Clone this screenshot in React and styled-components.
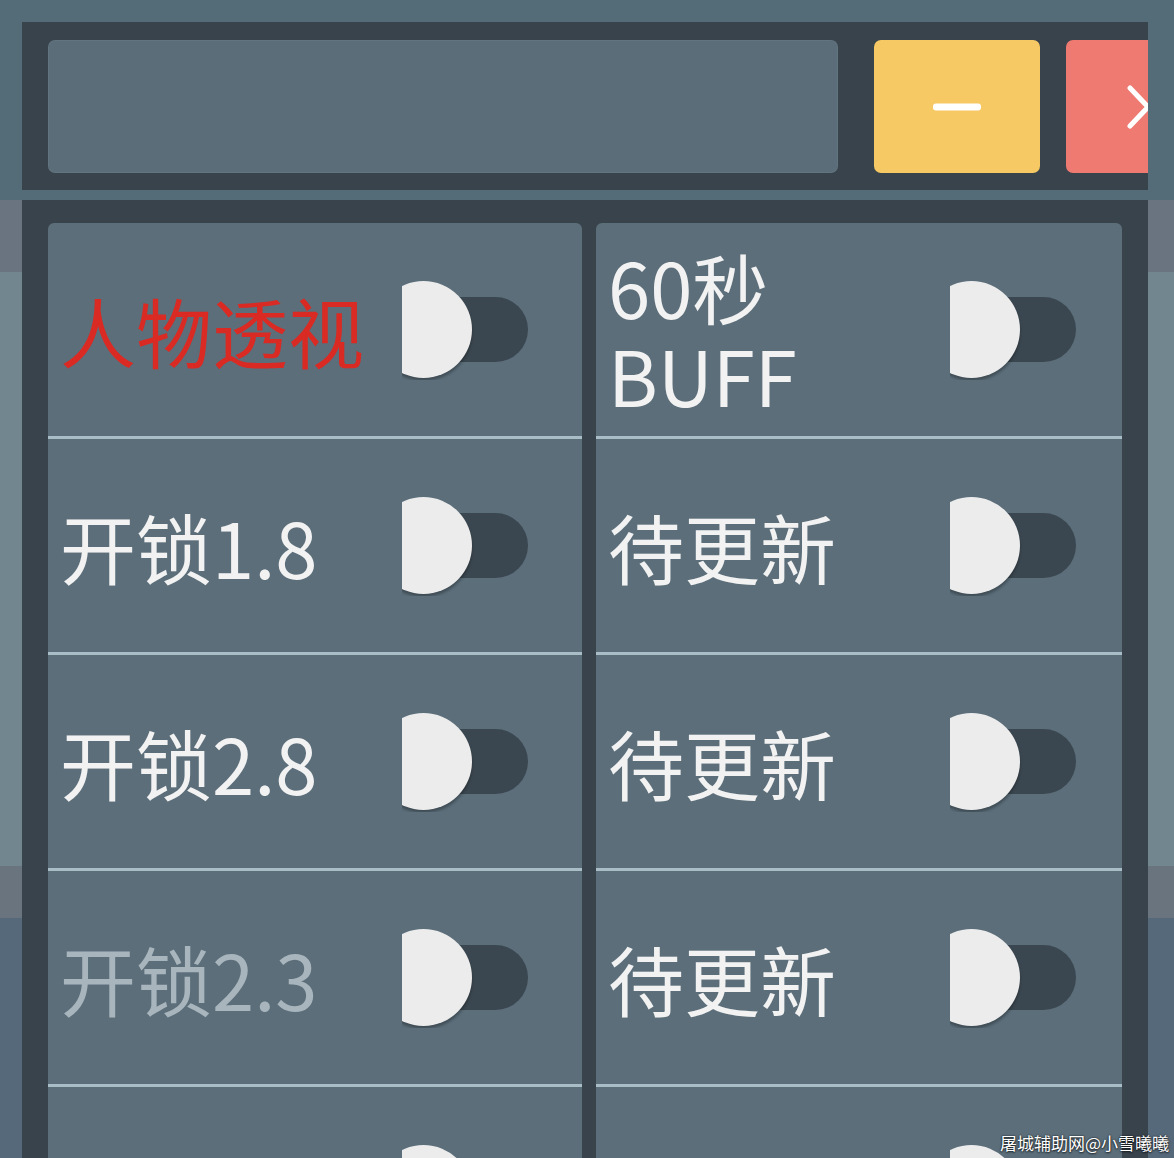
import React from 'react';
import styled, { createGlobalStyle } from 'styled-components';

const pageBg = '#546b78';
const panelDark = '#38434c';
const fieldBg = '#5a6d79';
const cellBg = '#5b6e7a';
const divider = '#a9bdc7';
const trackDark = '#3b4750';
const knobWhite = '#ececec';
const yellow = '#f6c965';
const coral = '#ef7a72';

const toneColors = {
    normal: '#f2f2f2',
    red: '#d92b24',
    muted: '#a9b5bd',
};

// strips of the window sitting behind the menu, top to bottom
const sideBands = [
    { h: 200, c: pageBg },
    { h: 72, c: '#6a7480' },
    { h: 594, c: '#71868f' },
    { h: 52, c: '#69747f' },
    { h: 240, c: '#56697a' },
];

const leftCheats = [
    { id: 'esp', label: '人物透视', tone: 'red' },
    { id: 'unlock18', label: '开锁1.8' },
    { id: 'unlock28', label: '开锁2.8' },
    { id: 'unlock23', label: '开锁2.3', tone: 'muted' },
    { id: 'unlock30', label: '开锁3.0', tone: 'muted' },
];

const rightCheats = [
    { id: 'buff', label: '60秒\nBUFF' },
    { id: 'todo1', label: '待更新' },
    { id: 'todo2', label: '待更新' },
    { id: 'todo3', label: '待更新' },
    { id: 'ammo', label: '无限子弹', tone: 'red' },
];

const GlobalStyle = createGlobalStyle`
    html, body {
        margin: 0;
        padding: 0;
        background: ${pageBg};
    }
    body {
        font-family: "Noto Sans CJK SC", "Noto Sans", sans-serif;
    }
`;

const Toggle = () => (
    <Switch>
        <Track />
        <Knob />
    </Switch>
);

const CheatColumn = ({ items }) => (
    <Column>
        {items.map(item => (
            <Row key={item.id}>
                <Label $tone={item.tone || 'normal'}>{item.label}</Label>
                <Toggle />
            </Row>
        ))}
    </Column>
);

const SideStrip = () => (
    <Strip>
        {sideBands.map((band, i) => (
            <Band key={i} $h={band.h} $c={band.c} />
        ))}
    </Strip>
);

const App = () => {
    return (
        <Page>
            <GlobalStyle />
            <SideStrip />
            <Menu>
                <TopBar>
                    <SearchField />
                    <ActionButton $w={166} $bg={yellow} aria-label='minimize'>
                        <svg width='48' height='8' viewBox='0 0 48 8'>
                            <rect x='0' y='0.5' width='48' height='7' rx='3' fill='#fff' />
                        </svg>
                    </ActionButton>
                    <ActionButton $w={146} $bg={coral} aria-label='collapse'>
                        <svg width='24' height='44' viewBox='0 0 24 44'>
                            <polyline points='3,3 21,22 3,41' fill='none' stroke='#fff' strokeWidth='5' strokeLinecap='round' strokeLinejoin='round' />
                        </svg>
                    </ActionButton>
                </TopBar>
                <Panel>
                    <CheatColumn items={leftCheats} />
                    <CheatColumn items={rightCheats} />
                </Panel>
            </Menu>
            <SideStrip />
            <Watermark>屠城辅助网@小雪曦曦</Watermark>
        </Page>
    );
};

const Page = styled.div`
    position: relative;
    display: grid;
    grid-template-columns: 22px 1126px 26px;
    width: 1174px;
    height: 1158px;
    overflow: hidden;
    background: ${pageBg};
`;

const Strip = styled.div`
    display: flex;
    flex-direction: column;
`;

const Band = styled.div`
    flex-shrink: 0;
    height: ${p => p.$h}px;
    background: ${p => p.$c};
`;

const Menu = styled.div`
    display: flex;
    flex-direction: column;
    padding-top: 22px;
    min-width: 0;
`;

const TopBar = styled.div`
    display: flex;
    align-items: center;
    gap: 26px;
    height: 168px;
    box-sizing: border-box;
    padding: 18px 0 17px 26px;
    background: ${panelDark};
    overflow: hidden;
`;

const SearchField = styled.div`
    flex-shrink: 0;
    width: 790px;
    height: 133px;
    margin-right: 10px;
    box-sizing: border-box;
    border-radius: 7px;
    border: 1px solid rgba(255, 255, 255, 0.05);
    background: ${fieldBg};
`;

const ActionButton = styled.button`
    flex-shrink: 0;
    display: flex;
    align-items: center;
    justify-content: center;
    width: ${p => p.$w}px;
    height: 133px;
    padding: 0;
    border: 0;
    border-radius: 7px;
    background: ${p => p.$bg};
`;

const Panel = styled.div`
    flex: 1;
    margin-top: 10px;
    display: grid;
    grid-template-columns: 534px 526px;
    column-gap: 14px;
    align-items: start;
    padding: 23px 26px 0 26px;
    background: ${panelDark};
    overflow: hidden;
`;

const Column = styled.div`
    display: flex;
    flex-direction: column;
`;

const Row = styled.div`
    display: flex;
    align-items: center;
    flex-shrink: 0;
    height: 213px;
    padding-left: 12px;
    background: ${cellBg};
    border-bottom: 3px solid ${divider};

    &:first-child {
        border-radius: 6px 6px 0 0;
    }
`;

const Label = styled.div`
    flex-shrink: 0;
    width: 342px;
    font-size: 76px;
    line-height: 88px;
    white-space: pre-line;
    color: ${p => toneColors[p.$tone]};
`;

const Switch = styled.div`
    position: relative;
    flex-shrink: 0;
    width: 128px;
    height: 100px;
    overflow: hidden;
`;

const Track = styled.span`
    position: absolute;
    left: -40px;
    top: 17px;
    width: 166px;
    height: 65px;
    border-radius: 33px;
    background: ${trackDark};
`;

const Knob = styled.span`
    position: absolute;
    left: -27px;
    top: 1px;
    width: 97px;
    height: 97px;
    border-radius: 50%;
    background: ${knobWhite};
    box-shadow: 0 3px 3px rgba(0, 0, 0, 0.3);
`;

const Watermark = styled.div`
    position: absolute;
    right: 5px;
    bottom: 4px;
    font-size: 17px;
    line-height: 22px;
    color: #ffffff;
    text-shadow: 0 0 2px rgba(0, 0, 0, 0.8), 0 1px 2px rgba(0, 0, 0, 0.6);
`;

export default App;
